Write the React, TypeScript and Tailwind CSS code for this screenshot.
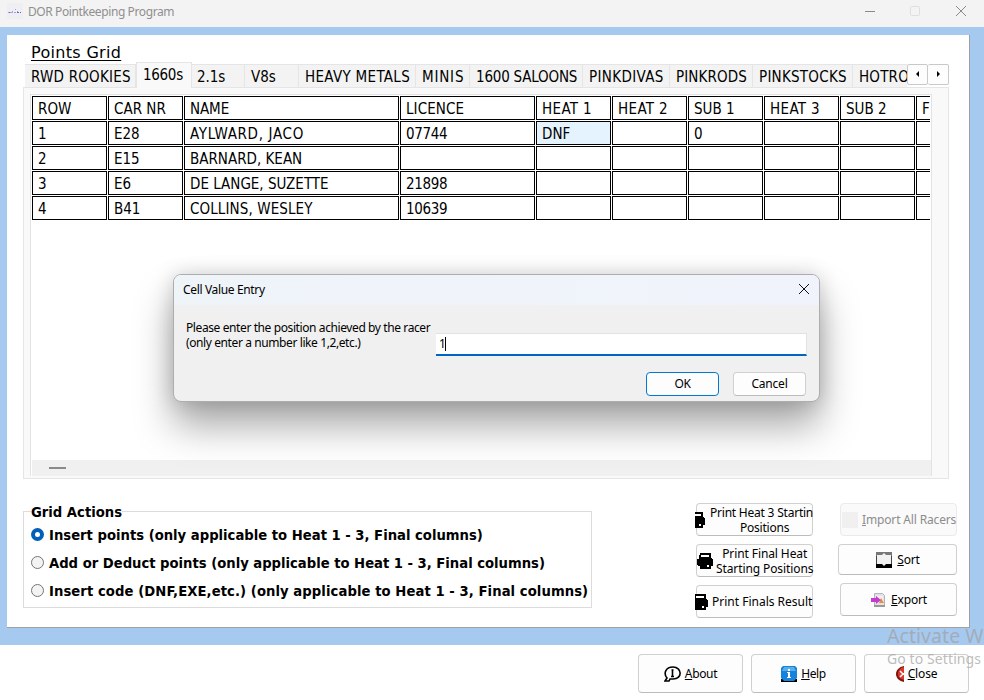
import React from "react";

const tabs = [
  { label: "RWD ROOKIES", w: "w-[111px]", t: "tracking-[0.22px]" },
  { label: "1660s", w: "w-[56px]", active: true, t: "tracking-[-0.3px]" },
  { label: "2.1s", w: "w-[53px]", t: "tracking-[-0.1px] -indent-px" },
  { label: "V8s", w: "w-[54px]", t: "" },
  { label: "HEAVY METALS", w: "w-[117px]", t: "tracking-[0.32px]" },
  { label: "MINIS", w: "w-[54px]", t: "tracking-[0.8px]" },
  { label: "1600 SALOONS", w: "w-[113px]", t: "tracking-[-0.2px]" },
  { label: "PINKDIVAS", w: "w-[87px]", t: "tracking-[0.35px]" },
  { label: "PINKRODS", w: "w-[83px]", t: "tracking-[0.1px]" },
  { label: "PINKSTOCKS", w: "w-[100px]", t: "tracking-[0.25px]" },
  { label: "HOTRODS", w: "w-[90px]", t: "tracking-[0.2px]" },
];

const rows = [
  ["ROW", "CAR NR", "NAME", "LICENCE", "HEAT 1", "HEAT 2", "SUB 1", "HEAT 3", "SUB 2", "FINAL"],
  ["1", "E28", "AYLWARD, JACO", "07744", "DNF", "", "0", "", "", ""],
  ["2", "E15", "BARNARD, KEAN", "", "", "", "", "", "", ""],
  ["3", "E6", "DE LANGE, SUZETTE", "21898", "", "", "", "", "", ""],
  ["4", "B41", "COLLINS, WESLEY", "10639", "", "", "", "", "", ""],
];

// Per-cell letter spacing, keyed by the cell's text.
const cellTracking: Record<string, string> = {
  NAME: "tracking-[-0.1px]",
  LICENCE: "tracking-[0.1px]",
  "HEAT 1": "tracking-[0.35px]",
  "HEAT 2": "tracking-[0.35px]",
  "HEAT 3": "tracking-[0.35px]",
  "AYLWARD, JACO": "tracking-[0.67px]",
  "07744": "tracking-[-0.35px]",
  "21898": "tracking-[-0.35px]",
  "10639": "tracking-[-0.35px]",
  "COLLINS, WESLEY": "tracking-[0.1px]",
};

const tahoma = "font-['DejaVu_Sans_Condensed','DejaVu_Sans',sans-serif]";
const segoe = "font-['Noto_Sans','Open_Sans',sans-serif]";

// `crop` is the number of pixels hidden on the left of the drawing.
function PrinterIcon({ crop = 0, className = "" }: { crop?: number; className?: string }) {
  const w = 16 - crop;
  return (
    <svg className={`shrink-0 ${className}`} width={w} height="16" viewBox={`${crop} 0 ${w} 16`} shapeRendering="crispEdges">
      <path d="M3 0h11v5h1v1h1v7h-2v3H3v-3H1v-1H0V6h2V2h1z" fill="#000" />
      <path d="M4 2h8v2H4zM10 12h2v2h-2z" fill="#fff" />
    </svg>
  );
}

const tones = {
  normal: "border-[#d0d0d0] border-b-[#bcbcbc] bg-[#fdfdfd] text-black",
  primary: "border-[#0078d4] bg-[#fdfdfd] text-black",
  disabled: "border-[#ebebeb] bg-[#fafafa] text-[#8c8c8c]",
};

function Btn({
  className = "",
  tone = "normal",
  children,
}: {
  className?: string;
  tone?: keyof typeof tones;
  children: React.ReactNode;
}) {
  return (
    <button className={`flex shrink-0 items-center rounded-[4px] border text-[12px] leading-[15px] ${tones[tone]} ${className}`}>
      {children}
    </button>
  );
}

function Radio({ checked }: { checked?: boolean }) {
  return checked ? (
    <span className="flex size-[13px] shrink-0 items-center justify-center rounded-full bg-[#005fb8]">
      <span className="size-[5px] rounded-full bg-white" />
    </span>
  ) : (
    <span className="size-[13px] shrink-0 rounded-full border border-[#757575] bg-[#f3f3f3]" />
  );
}

function TitleBar() {
  return (
    <header className="flex h-[27px] shrink-0 items-center bg-[#f3f3f3] pl-[7px] text-[#8f8f8f]">
      <svg width="16" height="16" viewBox="0 0 16 16" className="-mt-[5px] bg-[#efeff1]">
        <path d="M1.500 9.500h4M10 9.500h4" stroke="#6a5be0" strokeDasharray="2 1" />
        <path d="M7 9.500h2" stroke="#a69cf0" />
        <path d="M8 6.500h1M5 8.500h1M10 8.500h1" stroke="#a69cf0" />
      </svg>
      <span className="-mt-[3px] ml-[5px] text-[12px] tracking-[-0.4px]">DOR Pointkeeping Program</span>
      <svg width="110" height="22" viewBox="0 0 110 22" className="-mt-[5px] ml-auto mr-[13px]" fill="none">
        <path d="M4 11.500h10" stroke="#8a8a8a" />
        <rect x="49.500" y="6.500" width="9" height="9" rx="1" stroke="#dedede" />
        <path d="M95 6l10 10M105 6l-10 10" stroke="#8a8a8a" />
      </svg>
    </header>
  );
}

function TabStrip() {
  return (
    <div className="relative z-10 -mb-px flex h-[26px] items-end">
      <div className="flex h-[26px] w-[882px] items-end overflow-hidden">
        {tabs.map((t) =>
          t.active ? (
            <div key={t.label} className={`h-[26px] shrink-0 border border-b-0 border-[#e5e5e5] bg-[#f9f9f9] pl-[6px] text-[15px] leading-[25px] ${t.w} ${t.t}`}>
              {t.label}
            </div>
          ) : (
            <div key={t.label} className={`h-[24px] shrink-0 whitespace-nowrap border-r border-t border-b border-[#e5e5e5] bg-[#f3f3f3] pl-[6px] text-[15px] leading-[25px] ${t.w} ${t.t}`}>
              {t.label}
            </div>
          )
        )}
      </div>
      <div className="mb-[3px] flex h-[21px]">
        <span className="flex w-[21px] items-center justify-center rounded-[2px] border border-[#c9c9c9] bg-[#fdfdfd]">
          <svg width="5" height="6" viewBox="0 0 5 6" className="-mt-[2px]"><path d="M4 0v6L1 3z" /></svg>
        </span>
        <span className="flex w-[21px] items-center justify-center rounded-[2px] border border-l-0 border-[#c9c9c9] bg-[#fdfdfd]">
          <svg width="5" height="6" viewBox="0 0 5 6" className="-mt-[2px]"><path d="M1 0v6l3-3z" /></svg>
        </span>
      </div>
    </div>
  );
}

function Grid() {
  return (
    <div className="flex h-[382px] w-[902px] flex-col border-l border-r border-t border-[#e3e3e3] bg-white pl-px pt-px">
      <div className="flex w-[898px] flex-col gap-px overflow-hidden">
        {rows.map((r, ri) => (
          <div key={ri} className="grid h-[24px] w-[960px] grid-cols-[75px_75px_215px_135px_75px_75px_75px_75px_75px_75px] grid-rows-[24px] gap-px">
            {r.map((c, ci) => (
              <div
                key={ci}
                className={`h-[24px] border border-black pl-[5px] text-[15px] leading-[25px] ${ri === 1 && ci === 4 ? "bg-[#e5f3ff]" : "bg-white"} ${cellTracking[c] ?? ""}`}
              >
                {c}
              </div>
            ))}
          </div>
        ))}
      </div>
      <div className="mt-auto flex h-[16px] items-center bg-[#f0f0f0] pl-[17px]">
        <span className="h-[2px] w-[17px] bg-[#8a8a8a]" />
      </div>
    </div>
  );
}

function Dialog() {
  return (
    <div className={`absolute left-[173px] top-[274px] z-20 flex h-[128px] w-[647px] flex-col overflow-hidden rounded-[8px] border border-[#adadad] bg-[#f0f0f0] text-[12px] text-black shadow-[0_24px_38px_rgba(0,0,0,0.34),0_0_20px_rgba(0,0,0,0.16)] ${segoe}`}>
      <div className="flex h-[30px] shrink-0 items-center justify-between bg-gradient-to-r from-[#eff4f9] to-[#f0f3fb] pl-[9px] pr-[9px]">
        <span className="tracking-[-0.35px]">Cell Value Entry</span>
        <svg width="12" height="12" viewBox="0 0 12 12" stroke="#111" className="-mt-[2px]"><path d="M1 1l10 10M11 1L1 11" /></svg>
      </div>
      <div className="flex pl-[12px] pt-[15px]">
        <p className="w-[250px] whitespace-nowrap leading-[15px] tracking-[-0.4px]">
          Please enter the position achieved by the racer
          <br />
          (only enter a number like 1,2,etc.)
        </p>
        <div className="mt-[13px] flex h-[23px] w-[371px] items-center border-b-2 border-r border-t border-[#e2e2e2] border-b-[#0067c0] bg-white pl-[3px] tracking-[-0.6px]">
          1<span className="h-[14px] w-px bg-black" />
        </div>
      </div>
      <div className="mt-[16px] flex gap-[14px] pl-[472px]">
        <Btn tone="primary" className="h-[24px] w-[73px] justify-center pb-px tracking-[-0.3px]">OK</Btn>
        <Btn className="h-[24px] w-[73px] justify-center pb-px tracking-[-0.2px]">Cancel</Btn>
      </div>
    </div>
  );
}

export default function App() {
  return (
    <div className={`relative flex h-[700px] w-[984px] flex-col overflow-hidden bg-white text-black ${segoe}`}>
      <TitleBar />
      <main className="h-[618px] shrink-0 bg-[#a6c9ef] pl-[7px] pt-[8px]">
        <div className="flex h-[593px] w-[963px] flex-col border-b border-r border-[#a0a0a0] bg-white pl-[16px] pt-[5px]">
          <h1 className="ml-[8px] h-[22px] w-[90px] whitespace-nowrap font-['DejaVu_Sans',sans-serif] text-[16px] leading-[25px] tracking-[0.32px] underline underline-offset-2">
            Points Grid
          </h1>
          <div className={`ml-[2px] ${tahoma}`}>
            <TabStrip />
            <div className="-ml-[2px] h-[392px] w-[926px] border border-[#e5e5e5] bg-[#f9f9f9] pl-[6px] pt-[6px]">
              <Grid />
            </div>
          </div>
          <div className="mt-[24px] flex">
            <fieldset className={`flex h-[105px] w-[569px] flex-col border border-[#dcdcdc] pl-[7px] text-[14.670px] font-bold ${tahoma}`}>
              <legend className="h-[17px] w-[91px] whitespace-nowrap leading-[18px]">Grid Actions</legend>
              <label className="flex h-[28px] items-center gap-[5px] whitespace-nowrap"><Radio checked /><span className="pt-[2px]">Insert points (only applicable to Heat 1 - 3, Final columns)</span></label>
              <label className="flex h-[28px] items-center gap-[5px] whitespace-nowrap tracking-[-0.010px]"><Radio /><span className="pt-[2px]">Add or Deduct points (only applicable to Heat 1 - 3, Final columns)</span></label>
              <label className="flex h-[28px] items-center gap-[5px] whitespace-nowrap tracking-[0.070px]"><Radio /><span className="pt-[2px]">Insert code (DNF,EXE,etc.) (only applicable to Heat 1 - 3, Final columns)</span></label>
            </fieldset>
            <div className="ml-[104px] flex flex-col gap-[8px]">
              <Btn className="h-[33px] w-[117px]">
                <PrinterIcon crop={6} className="-ml-[2px]" />
                <span className="ml-[5px] whitespace-nowrap text-left tracking-[-0.22px]">
                  Print Heat 3 Startin
                  <br />
                  <span className="pl-[30px]">Positions</span>
                </span>
              </Btn>
              <Btn className="h-[33px] w-[117px]">
                <PrinterIcon />
                <span className="ml-[3px] whitespace-nowrap tracking-[-0.1px]">Print Final Heat<br />Starting Positions</span>
              </Btn>
              <Btn className="h-[33px] w-[117px]">
                <PrinterIcon crop={3} className="-ml-[2px]" />
                <span className="ml-[4px] whitespace-nowrap">Print Finals Result</span>
              </Btn>
            </div>
            <div className="ml-[25px] flex flex-col items-end">
              <Btn tone="disabled" className="h-[33px] w-[117px]">
                <span className="ml-px mr-[4px] size-[16px] shrink-0 bg-[#f0f0f0]" />
                <span className="whitespace-nowrap tracking-[-0.15px]"><u>I</u>mport All Racers</span>
              </Btn>
              <Btn className="mt-[8px] h-[31px] w-[119px] justify-center">
                <svg width="16" height="16" viewBox="0 0 16 16" className="ml-px mr-[5px]">
                  <path d="M0 0h16v4H0z" fill="#777" /><path d="M0 4h16v9H0z" fill="#444" /><path d="M0 12h16v4H0z" fill="#000" />
                  <path d="M1 3h5l2-2 2 2h5v9h-5l-2 2-2-2H1z" fill="#f1f1f1" />
                </svg>
                <span className="tracking-[-0.2px]"><u>S</u>ort</span>
              </Btn>
              <Btn className="mt-[8px] h-[33px] w-[117px] justify-center">
                <ExportIcon />
                <span className="tracking-[-0.2px]"><u>E</u>xport</span>
              </Btn>
            </div>
          </div>
        </div>
      </main>
      <footer className="flex h-[55px] gap-[8px] pl-[638px] pt-[9px]">
        <Btn className="h-[39px] w-[105px] justify-center">
          <svg width="17" height="16" viewBox="0 0 17 16" className="mr-[4px]" fill="none" stroke="#000">
            <path d="M1 15l2-3C-1 7 2 1 9 1c9 0 10 12 0 12H6l-1 2z" strokeWidth="1.600" />
            <path d="M7.500 4h2M8.500 4v7M7 10.500h3" strokeWidth="1.600" />
          </svg>
          <span className="tracking-[-0.35px]"><u>A</u>bout</span>
        </Btn>
        <Btn className="h-[39px] w-[105px] justify-center">
          <svg width="16" height="16" viewBox="0 0 16 16" className="mr-[4px]">
            <path d="M0 13h2v1h12v-1h2v3H0z" fill="#000" />
            <path d="M2 0h12l2 2v10l-3 3H3l-3-3V2z" fill="#1682dc" />
            <path d="M3 1h10l2 4H1z" fill="#59aee9" />
            <path d="M7 3h2v2H7zM6 6h3v5h1v1H6v-1h1V7H6z" fill="#fff" />
          </svg>
          <span className="tracking-[-0.35px]"><u>H</u>elp</span>
        </Btn>
        <Btn className="h-[39px] w-[105px] justify-center">
          <svg width="8" height="16" viewBox="0 0 8 16" className="mr-[4px]">
            <path d="M8 0C3 1 0 4 0 8s3 7 8 8z" fill="#821510" />
            <path d="M8 1C4 2 2 5 2 8s2 5 6 6z" fill="#d83a2c" />
            <path d="M4 5l3 3-3 3M8 7v2" fill="none" stroke="#fff" strokeWidth="1.500" />
          </svg>
          <span className="tracking-[-0.15px]"><u>C</u>lose</span>
        </Btn>
      </footer>
      <Dialog />
      <div className="pointer-events-none absolute left-[887px] top-[623px] z-30 whitespace-nowrap text-[#a0a0a0]/70">
        <div className="text-[19.500px] leading-[26px] tracking-[0.05px]">Activate Windows</div>
        <div className="text-[14px] leading-[20px] tracking-[0.1px]">Go to Settings to activate Windows.</div>
      </div>
    </div>
  );
}

function ExportIcon() {
  return (
    <svg width="15" height="16" viewBox="0 0 15 16" className="ml-px mr-[5px]">
      <path d="M3.500 1.500h8l2 2v10h-10z" fill="#e4e2e6" stroke="#b5b3b7" />
      <path d="M6 4h6v7H6z" fill="#f4f0f4" />
      <path d="M8 11l2-5 3 5z" fill="#e5913a" />
      <path d="M3 13h11v2H3z" fill="#999" />
      <path d="M0 6h5V4l5 4-5 4v-2H0z" fill="#c63bcf" />
    </svg>
  );
}
